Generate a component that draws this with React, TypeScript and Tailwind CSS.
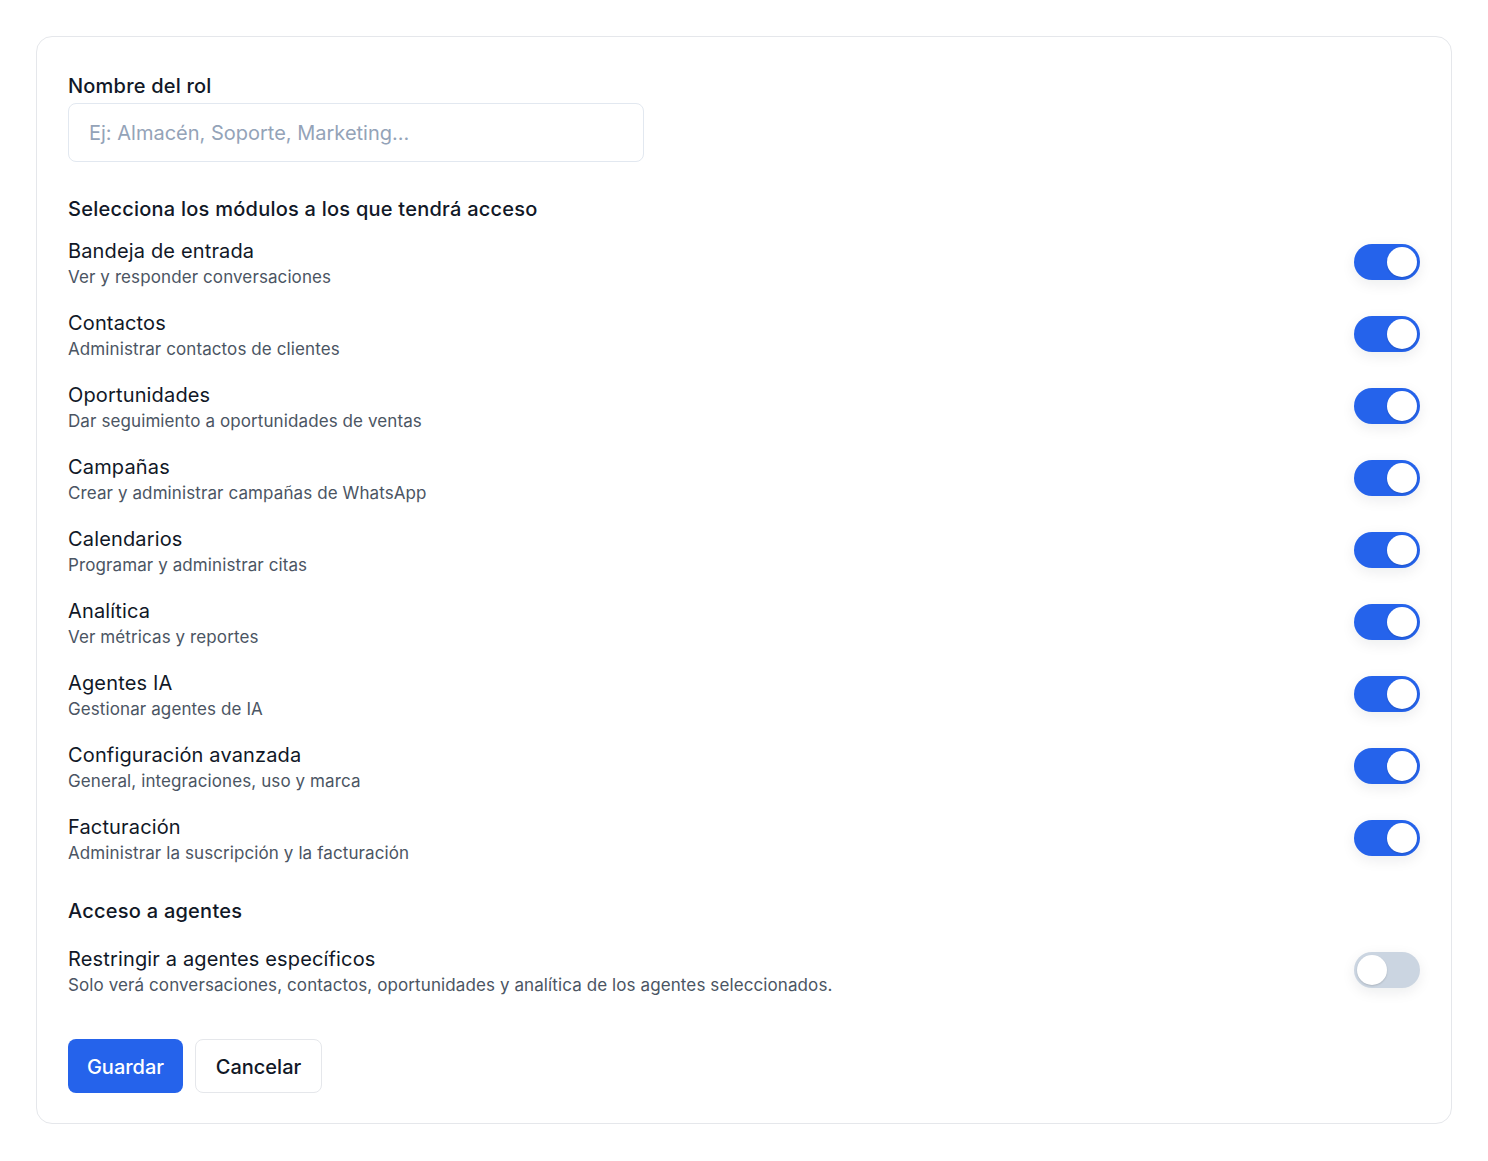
import React, { useState } from "react";

const modules = [
  ["Bandeja de entrada", "Ver y responder conversaciones"],
  ["Contactos", "Administrar contactos de clientes"],
  ["Oportunidades", "Dar seguimiento a oportunidades de ventas"],
  ["Campañas", "Crear y administrar campañas de WhatsApp"],
  ["Calendarios", "Programar y administrar citas"],
  ["Analítica", "Ver métricas y reportes"],
  ["Agentes IA", "Gestionar agentes de IA"],
  ["Configuración avanzada", "General, integraciones, uso y marca"],
  ["Facturación", "Administrar la suscripción y la facturación"],
];

function Toggle({ on, onClick }: { on: boolean; onClick: () => void }) {
  return (
    <button
      type="button"
      onClick={onClick}
      className={`relative mb-[2px] h-9 w-[66px] shrink-0 rounded-full shadow-[0_4px_14px_rgba(15,23,42,0.08)] ${
        on ? "bg-[#2563eb]" : "bg-[#cbd5e1]"
      }`}
    >
      <span
        className={`absolute top-[3px] h-[30px] w-[30px] rounded-full bg-white shadow-[0_1px_2px_rgba(0,0,0,0.15)] ${
          on ? "left-[33px]" : "left-[3px]"
        }`}
      />
    </button>
  );
}

function Row({
  title,
  desc,
  on,
  onClick,
}: {
  title: string;
  desc: string;
  on: boolean;
  onClick: () => void;
}) {
  return (
    <div className="flex items-center justify-between">
      <div className="flex flex-col">
        <span className="text-[20px] leading-7 tracking-[0.15px] text-[#111827]">
          {title}
        </span>
        <span className="text-[17px] leading-6 tracking-[0.1px] text-[#4b5563]">
          {desc}
        </span>
      </div>
      <Toggle on={on} onClick={onClick} />
    </div>
  );
}

export default function App() {
  const [states, setStates] = useState<boolean[]>(modules.map(() => true));
  const [restrict, setRestrict] = useState(false);
  return (
    <div
      className="min-h-screen bg-white p-9"
      style={{ fontFamily: "Inter, 'Noto Sans', sans-serif" }}
    >
      <div className="rounded-2xl border border-[#e5e7eb] bg-white px-[31px] pt-[35px] pb-[30px]">
        <div className="flex flex-col">
          <label className="text-[20px] font-medium leading-7 tracking-[0.2px] text-[#111827]">
            Nombre del rol
          </label>
          <input
            className="mt-[3px] h-[59px] w-[576px] rounded-lg border border-[#e2e8f0] px-5 text-[20px] text-[#111827] outline-none placeholder:text-[#94a3b8]"
            placeholder="Ej: Almacén, Soporte, Marketing..."
          />
        </div>

        <h3 className="mt-[33px] text-[20px] font-medium leading-7 tracking-[0.24px] text-[#111827]">
          Selecciona los módulos a los que tendrá acceso
        </h3>
        <div className="mt-[14px] flex flex-col gap-5">
          {modules.map(([t, d], i) => (
            <Row
              key={t}
              title={t}
              desc={d}
              on={states[i]}
              onClick={() =>
                setStates((s) => s.map((v, j) => (j === i ? !v : v)))
              }
            />
          ))}
        </div>

        <h3 className="mt-8 text-[20px] font-medium leading-7 tracking-[0.24px] text-[#111827]">
          Acceso a agentes
        </h3>
        <div className="mt-5">
          <Row
            title="Restringir a agentes específicos"
            desc="Solo verá conversaciones, contactos, oportunidades y analítica de los agentes seleccionados."
            on={restrict}
            onClick={() => setRestrict((r) => !r)}
          />
        </div>

        <div className="mt-[42px] flex gap-3">
          <button className="h-[54px] w-[115px] rounded-lg bg-[#2563eb] pt-[2px] text-[20px] font-medium text-white">
            Guardar
          </button>
          <button className="h-[54px] w-[127px] rounded-lg border border-[#e5e7eb] bg-white pt-[2px] text-[20px] font-medium text-[#111827]">
            Cancelar
          </button>
        </div>
      </div>
    </div>
  );
}
